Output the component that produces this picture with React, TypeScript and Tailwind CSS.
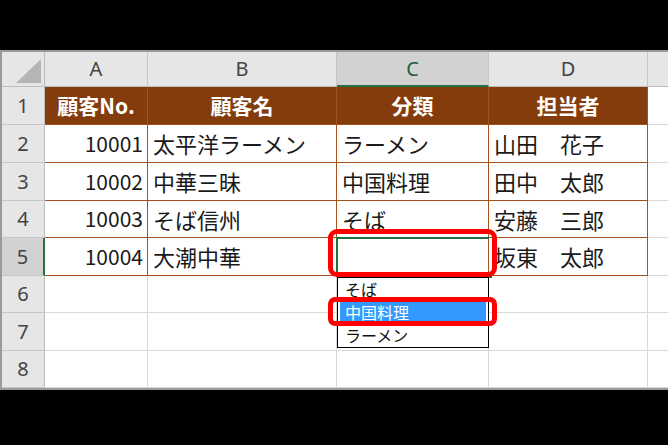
import React from "react"

const jp = "font-['Noto_Sans_CJK_JP','Noto_Sans',sans-serif]"
const ui = "font-['Noto_Sans','Liberation_Sans',sans-serif]"

const rows = [
  ["顧客No.", "顧客名", "分類", "担当者"],
  ["10001", "太平洋ラーメン", "ラーメン", "山田　花子"],
  ["10002", "中華三昧", "中国料理", "田中　太郎"],
  ["10003", "そば信州", "そば", "安藤　三郎"],
  ["10004", "大潮中華", "", "坂東　太郎"],
]

const rowHeights = ["h-[38px]", "h-[38px]", "h-[38px]", "h-[37px]", "h-[38px]", "h-[37px]", "h-[38px]", "h-[37px]"]

function ColHeader({ label, active }: { label: string; active?: boolean }) {
  return (
    <div
      className={`flex items-center justify-center border-r border-[#c6c6c6] text-[20px] ${ui} ${
        active ? "bg-[#d2d2d2] border-b-2 border-b-[#217346] text-[#1f5c3a]" : "bg-[#e6e6e6] border-b border-b-[#bdbdbd] text-[#444]"
      }`}
    >
      {label}
    </div>
  )
}

export default function App() {
  return (
    <div className="w-[668px] h-[445px] bg-black flex flex-col">
      <div className="h-[50px] shrink-0" />

      <div className="relative border-t-2 border-l-2 border-b-2 border-[#9a9a9a] bg-white">
        {/* column headers */}
        <div className="grid grid-cols-[43px_103px_189px_152px_159px_1fr] h-[35px]">
          <div className="relative bg-[#e6e6e6] border-r border-b border-[#bdbdbd]">
            <svg className="absolute left-[14px] top-[7px]" width="25" height="24" viewBox="0 0 25 24">
              <polygon points="25,0 25,24 0,24" fill="#b5b5b5" />
            </svg>
          </div>
          <ColHeader label="A" />
          <ColHeader label="B" />
          <ColHeader label="C" active />
          <ColHeader label="D" />
          <div className="bg-[#e6e6e6] border-b border-[#bdbdbd]" />
        </div>

        {rowHeights.map((h, i) => {
          const data = rows[i]
          const isHead = i === 0
          const selRow = i === 4
          return (
            <div key={i} className={`grid grid-cols-[43px_103px_189px_152px_159px_1fr] ${h}`}>
              <div
                className={`flex items-center justify-center text-[20px] text-[#444] border-b border-[#c6c6c6] ${ui} ${
                  selRow ? "bg-[#d2d2d2] border-r-2 border-r-[#217346]" : "bg-[#e6e6e6] border-r border-r-[#bdbdbd]"
                }`}
              >
                {i + 1}
              </div>
              {[0, 1, 2, 3].map((c) => {
                if (!data) {
                  return <div key={c} className="border-r border-b border-[#d9d9d9]" />
                }
                const text = data[c]
                const align = isHead ? "justify-center" : c === 0 ? "justify-end pr-[4px]" : "justify-start pl-[5px]"
                const size = isHead || c === 0 ? "text-[21px]" : "text-[22px]"
                return (
                  <div
                    key={c}
                    className={`relative flex items-center border-r border-b border-[#a5521c] ${size} ${jp} ${align} ${
                      isHead ? "bg-[#843c0c] text-white font-bold" : "bg-white text-[#1a1a1a]"
                    }`}
                  >
                    {text}
                    {selRow && c === 2 && (
                      <div className="absolute -left-px -top-px right-[-3px] bottom-[-2px] border-2 border-[#217346]">
                        <div className="absolute right-[-4px] bottom-[-4px] w-[6px] h-[6px] bg-[#217346] border border-white" />
                      </div>
                    )}
                  </div>
                )
              })}
              <div className="border-b border-[#d9d9d9]" />
            </div>
          )
        })}

        {/* dropdown list */}
        <div className={`absolute left-[335px] top-[225px] w-[152px] bg-white border border-black px-[2px] ${jp}`}>
          <div className="h-[23px] pl-[5px] text-[16px] leading-[22px] text-[#111]">そば</div>
          <div className="h-[23px] pl-[5px] text-[16px] leading-[23px] text-white bg-[#3399ff]">中国料理</div>
          <div className="h-[23px] pl-[5px] text-[16px] leading-[23px] text-[#111]">ラーメン</div>
        </div>

        {/* red callouts */}
        <div className="absolute left-[326px] top-[177px] w-[169px] h-[48px] border-[5px] border-[#ff0000] rounded-[9px]" />
        <div className="absolute left-[326px] top-[245px] w-[169px] h-[29px] border-[5px] border-[#ff0000] rounded-[7px]" />
      </div>
    </div>
  )
}
